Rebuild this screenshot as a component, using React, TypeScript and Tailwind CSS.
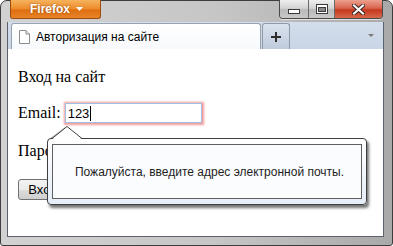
import React from "react";

// Firefox (Windows 7) window with a form validation bubble
function WinButtons() {
  return (
    <div className="ml-auto mr-px flex h-[19px] overflow-hidden rounded-b-[4px] border border-t-0 border-[#4a4a4a] shadow-[0_1px_0_rgba(255,255,255,0.6)]">
      <div className="flex w-[29px] items-end justify-center border-r border-[#6a6a6a] bg-[linear-gradient(#eeeeee,#d4d4d4_45%,#b9b9b9_55%,#c9c9c9)] pb-[4px]">
        <svg width="12" height="5" viewBox="0 0 12 5">
          <rect x="0.5" y="0.5" width="11" height="4" fill="#ffffff" stroke="#3a3a3a" />
        </svg>
      </div>
      <div className="flex w-[26px] items-center justify-center border-r border-[#6a6a6a] bg-[linear-gradient(#eeeeee,#d4d4d4_45%,#b9b9b9_55%,#c9c9c9)]">
        <svg width="12" height="10" viewBox="0 0 12 10">
          <rect x="0.5" y="0.5" width="11" height="9" fill="#ffffff" stroke="#3a3a3a" />
          <rect x="2.5" y="3.5" width="7" height="4" fill="#8a8a8a" stroke="#3a3a3a" />
        </svg>
      </div>
      <div className="flex w-[47px] items-center justify-center bg-[linear-gradient(#eba08f,#d9654f_45%,#c5381f_55%,#d7684b)]">
        <svg width="13" height="11" viewBox="0 0 13 11">
          <path d="M2 1.5 L11 9.5 M11 1.5 L2 9.5" stroke="#3a2a28" strokeWidth="4" strokeLinecap="square" />
          <path d="M2 1.5 L11 9.5 M11 1.5 L2 9.5" stroke="#ffffff" strokeWidth="2" strokeLinecap="square" />
        </svg>
      </div>
    </div>
  );
}

function PageIcon() {
  return (
    <svg width="11" height="14" viewBox="0 0 11 14" className="shrink-0">
      <path d="M0.5 0.5 H7 L10.5 4 V13.5 H0.5 Z" fill="#ffffff" stroke="#8c8c8c" />
      <path d="M7 0.5 V4 H10.5" fill="#e6e6e6" stroke="#8c8c8c" />
    </svg>
  );
}

export default function App() {
  return (
    <div className="relative h-[246px] w-[393px] bg-white font-['Liberation_Sans',Arial,sans-serif]">
      <div className="flex h-full flex-col rounded-t-[7px] rounded-b-[3px] border border-[#3d3d3d] bg-[linear-gradient(90deg,#d2d2d2,#c6c6c6_55%,#a9a9a9)] pb-[8px] pl-[6px] pr-[8px]">
        {/* title bar */}
        <div className="-mt-px flex h-[22px] items-start">
          <div className="ml-[3px] flex h-[19px] w-[91px] items-center justify-center gap-[6px] rounded-b-[3px] border border-t-0 border-[#9c4c0c] bg-[linear-gradient(#f6b35e,#ec8a2a_50%,#dd6e0e_55%,#e9842a)] pl-[2px]">
            <span className="text-[12px] font-bold leading-none text-white [text-shadow:0_0_2px_rgba(120,50,0,0.8)]">Firefox</span>
            <svg width="7" height="4" viewBox="0 0 7 4">
              <path d="M0 0 H7 L3.5 4 Z" fill="#ffffff" />
            </svg>
          </div>
          <WinButtons />
        </div>

        <div className="flex flex-1 flex-col border-x border-b border-[#5c636c]">
          {/* tab strip */}
          <div className="flex h-[27px] items-end bg-[linear-gradient(#d3ddeb,#c9d5e6)] pl-[3px]">
            <div className="flex h-[26px] w-[250px] items-center gap-[6px] rounded-t-[3px] border border-b-0 border-[#98a3b1] bg-[linear-gradient(#ffffff,#f7f9fc)] pl-[7px]">
              <PageIcon />
              <span className="text-[12px] leading-none text-black">Авторизация на сайте</span>
            </div>
            <div className="ml-px flex h-[26px] w-[28px] items-center justify-center rounded-t-[3px] border border-b-0 border-[#8f9aa8] bg-[linear-gradient(#d9e2ee,#bfcadb)]">
              <svg width="10" height="10" viewBox="0 0 10 10">
                <path d="M5 0 V10 M0 5 H10" stroke="#2e2e2e" strokeWidth="2" />
              </svg>
            </div>
            <div className="ml-auto mb-[12px] mr-[9px]">
              <svg width="6" height="3" viewBox="0 0 6 3">
                <path d="M0 0 H6 L3 3 Z" fill="#7a7a7a" />
              </svg>
            </div>
          </div>

          {/* page content */}
          <div className="flex-1 bg-white pl-[10px] pt-[19px] font-['Liberation_Serif','Times_New_Roman',serif] text-[16px] text-black">
            <div className="h-[18px] leading-[18px]">Вход на сайт</div>
            <div className="mt-[15px] flex h-[24px] items-center">
              <span className="leading-[18px]">Email:</span>
              <div className="ml-[4px] flex h-[20px] w-[137px] items-center border border-[#9fc0e3] pl-[2px] font-['Liberation_Sans',Arial,sans-serif] text-[13px] shadow-[0_0_2px_1.5px_#f39a9a]">
                <span className="leading-none">123</span>
                <span className="ml-px h-[15px] w-px bg-black" />
              </div>
            </div>
            <div className="mt-[14px] flex h-[24px] items-center">
              <span className="leading-[18px]">Пароль:</span>
              <div className="ml-[4px] h-[20px] w-[137px] border border-[#a9a9a9]" />
            </div>
            <div className="mt-[16px] flex h-[21px] w-[50px] items-center justify-center rounded-[3px] border border-[#707070] bg-[linear-gradient(#f2f2f2,#ebebeb_50%,#dddddd_50%,#cfcfcf)] font-['Liberation_Sans',Arial,sans-serif] text-[13px]">
              Вход
            </div>
          </div>
        </div>
      </div>

      {/* validation bubble */}
      <div className="absolute left-[47px] top-[138px] flex h-[67px] w-[320px] rounded-[4px] border border-[#3f3f3f] bg-[linear-gradient(#ffffff,#e4edf8)] px-[4px] py-[5px] shadow-[2px_3px_3px_rgba(0,0,0,0.55)]">
        <div className="flex flex-1 items-center justify-center border border-[#5f5f5f] bg-[#fbfcfe] pl-[5px] text-[12px] text-[#1e1e1e]">
          Пожалуйста, введите адрес электронной почты.
        </div>
      </div>
      <svg className="absolute left-[50px] top-[124px]" width="34" height="16" viewBox="0 0 34 16">
        <path d="M1 14.5 L16 3.5" fill="none" stroke="rgba(0,0,0,0.25)" strokeWidth="2" />
        <path d="M2 15.5 L17 2.5 L32 15.5 Z" fill="#ffffff" />
        <path d="M2 14.5 L17 2.5 L32 14.5" fill="none" stroke="#3f3f3f" strokeWidth="1" />
      </svg>
    </div>
  );
}
